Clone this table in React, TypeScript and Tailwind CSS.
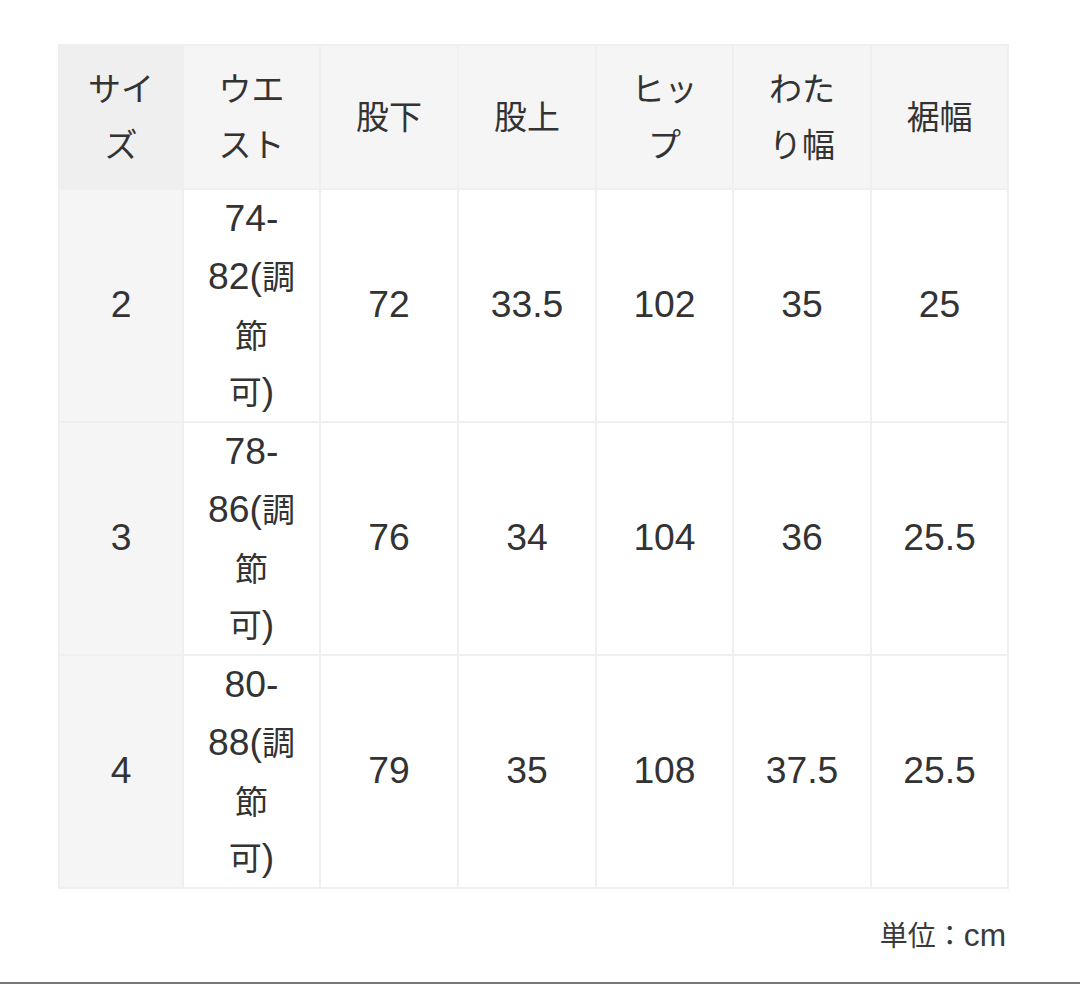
const headers: string[][] = [
  ["サイ", "ズ"],
  ["ウエ", "スト"],
  ["股下"],
  ["股上"],
  ["ヒッ", "プ"],
  ["わた", "り幅"],
  ["裾幅"],
];

const rows = [
  { size: "2", waist: ["74-", "82(調", "節", "可)"], cells: ["72", "33.5", "102", "35", "25"] },
  { size: "3", waist: ["78-", "86(調", "節", "可)"], cells: ["76", "34", "104", "36", "25.5"] },
  { size: "4", waist: ["80-", "88(調", "節", "可)"], cells: ["79", "35", "108", "37.5", "25.5"] },
];

// latin runs get a wider sans so digits read like the original
function Mixed({ text }: { text: string }) {
  const parts = text.match(/[\u3000-\u9fff\uff00-\uffef]+|[^\u3000-\u9fff\uff00-\uffef]+/g) ?? [];
  return (
    <>
      {parts.map((p, i) =>
        /[\u3000-\u9fff\uff00-\uffef]/.test(p) ? (
          <span key={i}>{p}</span>
        ) : (
          <span key={i} className="font-['Liberation_Sans'] text-[1.13em]">
            {p}
          </span>
        )
      )}
    </>
  );
}

function Lines({ lines, h = "h-[58px]" }: { lines: string[]; h?: string }) {
  return (
    <>
      {lines.map((l, i) => (
        <div key={i} className={`flex items-center justify-center ${h}`}>
          <span className="whitespace-nowrap leading-none">
            <Mixed text={l} />
          </span>
        </div>
      ))}
    </>
  );
}

export default function App() {
  return (
    <main
      className="flex h-[984px] w-[1080px] flex-col bg-white text-[#333333]"
      style={{ fontFamily: '"Noto Sans CJK JP", "Noto Sans", sans-serif' }}
    >
      <div className="pl-[58px] pt-[44px]">
        <table className="w-[949px] table-fixed border-collapse text-center text-[33px]">
          <colgroup>
            <col className="w-[124px]" />
            <col className="w-[137px]" />
            <col className="w-[138px]" />
            <col className="w-[138px]" />
            <col className="w-[137px]" />
            <col className="w-[138px]" />
            <col className="w-[137px]" />
          </colgroup>
          <thead>
            <tr className="h-[144px]">
              {headers.map((h, i) => (
                <th
                  key={i}
                  className={`border-2 border-[#efefef] pb-[3px] font-normal ${
                    i === 0 ? "bg-[#efefef]" : "bg-[#f5f5f5]"
                  }`}
                >
                  <Lines lines={h} h="h-[56px]" />
                </th>
              ))}
            </tr>
          </thead>
          <tbody>
            {rows.map((r) => (
              <tr key={r.size}>
                <td className="border-2 border-[#efefef] bg-[#f5f5f5] pb-[2px]">
                  <Lines lines={[r.size]} />
                </td>
                <td className="border-2 border-[#efefef]">
                  <Lines lines={r.waist} h="h-[57.75px]" />
                </td>
                {r.cells.map((c, i) => (
                  <td key={i} className="border-2 border-[#efefef] pb-[2px]">
                    <Lines lines={[c]} />
                  </td>
                ))}
              </tr>
            ))}
          </tbody>
        </table>
      </div>
      <p className="mt-[27px] w-[1006px] text-right text-[28px] leading-[36px] text-[#3a3a3a]">
        <Mixed text="単位：cm" />
      </p>
      <div className="mt-auto h-[2px] w-full bg-[#777777]" />
    </main>
  );
}
